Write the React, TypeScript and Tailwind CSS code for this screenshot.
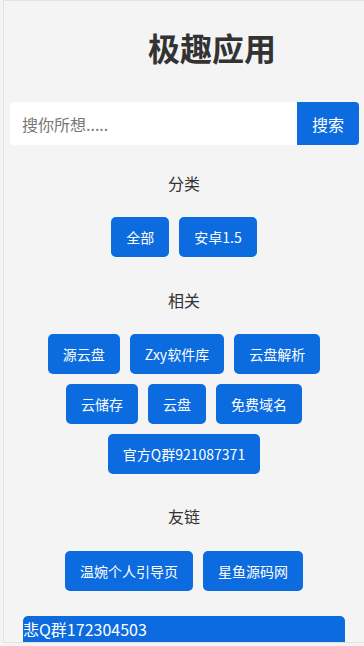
import React from 'react';

const categories = ['全部', '安卓1.5'];
const related = ['源云盘', 'Zxy软件库', '云盘解析', '云储存', '云盘', '免费域名', '官方Q群921087371'];
const friends = ['温婉个人引导页', '星鱼源码网'];

const LinkButton: React.FC<{ label: string }> = ({ label }) => (
  <a className="h-10 px-[15px] flex items-center rounded-[5px] bg-[#0b6bdf] text-white text-[14px] leading-none">
    {label}
  </a>
);

const Section: React.FC<{ title: string; items: string[]; mt: string; gap: string }> = ({ title, items, mt, gap }) => (
  <section className={mt}>
    <h2 className="text-center text-[16px] leading-6 text-[#333]">{title}</h2>
    <div className={`${gap} flex flex-wrap justify-center gap-[10px] px-[40px]`}>
      {items.map((item) => (
        <LinkButton key={item} label={item} />
      ))}
    </div>
  </section>
);

const App: React.FC = () => {
  return (
    <div
      className="w-[364px] h-[646px] bg-[#f4f4f4] overflow-hidden"
      style={{ fontFamily: '"Noto Sans CJK SC", "Noto Sans", sans-serif' }}
    >
      <div className="ml-[3px] h-[643px] border-l border-t border-b border-[#e2e2e2] overflow-hidden">
        <h1 className="mt-[26px] pl-[56px] text-center text-[32px] leading-10 font-bold text-[#333]">极趣应用</h1>

        <div className="mt-[35px] mx-[6px] mr-[5px] flex h-[43px]">
          <input
            type="text"
            placeholder="搜你所想....."
            className="flex-1 min-w-0 bg-white rounded-l-[4px] pl-[12px] text-[16px] text-[#333] placeholder:text-[#777] outline-none"
          />
          <button className="w-[62px] bg-[#0b6bdf] text-white text-[16px] rounded-r-[4px]">搜索</button>
        </div>

        <Section title="分类" items={categories} mt="mt-[26px]" gap="mt-[22px]" />
        <Section title="相关" items={related} mt="mt-[31px]" gap="mt-[22px]" />
        <Section title="友链" items={friends} mt="mt-[30px]" gap="mt-[23px]" />

        <div className="mt-[25px] mx-[19px] h-[40px] bg-[#0b6bdf] rounded-t-[5px] overflow-hidden">
          <div className="whitespace-nowrap text-white text-[16px] leading-6 pt-[1px]">悲Q群172304503</div>
        </div>
      </div>
    </div>
  );
};

export default App;
